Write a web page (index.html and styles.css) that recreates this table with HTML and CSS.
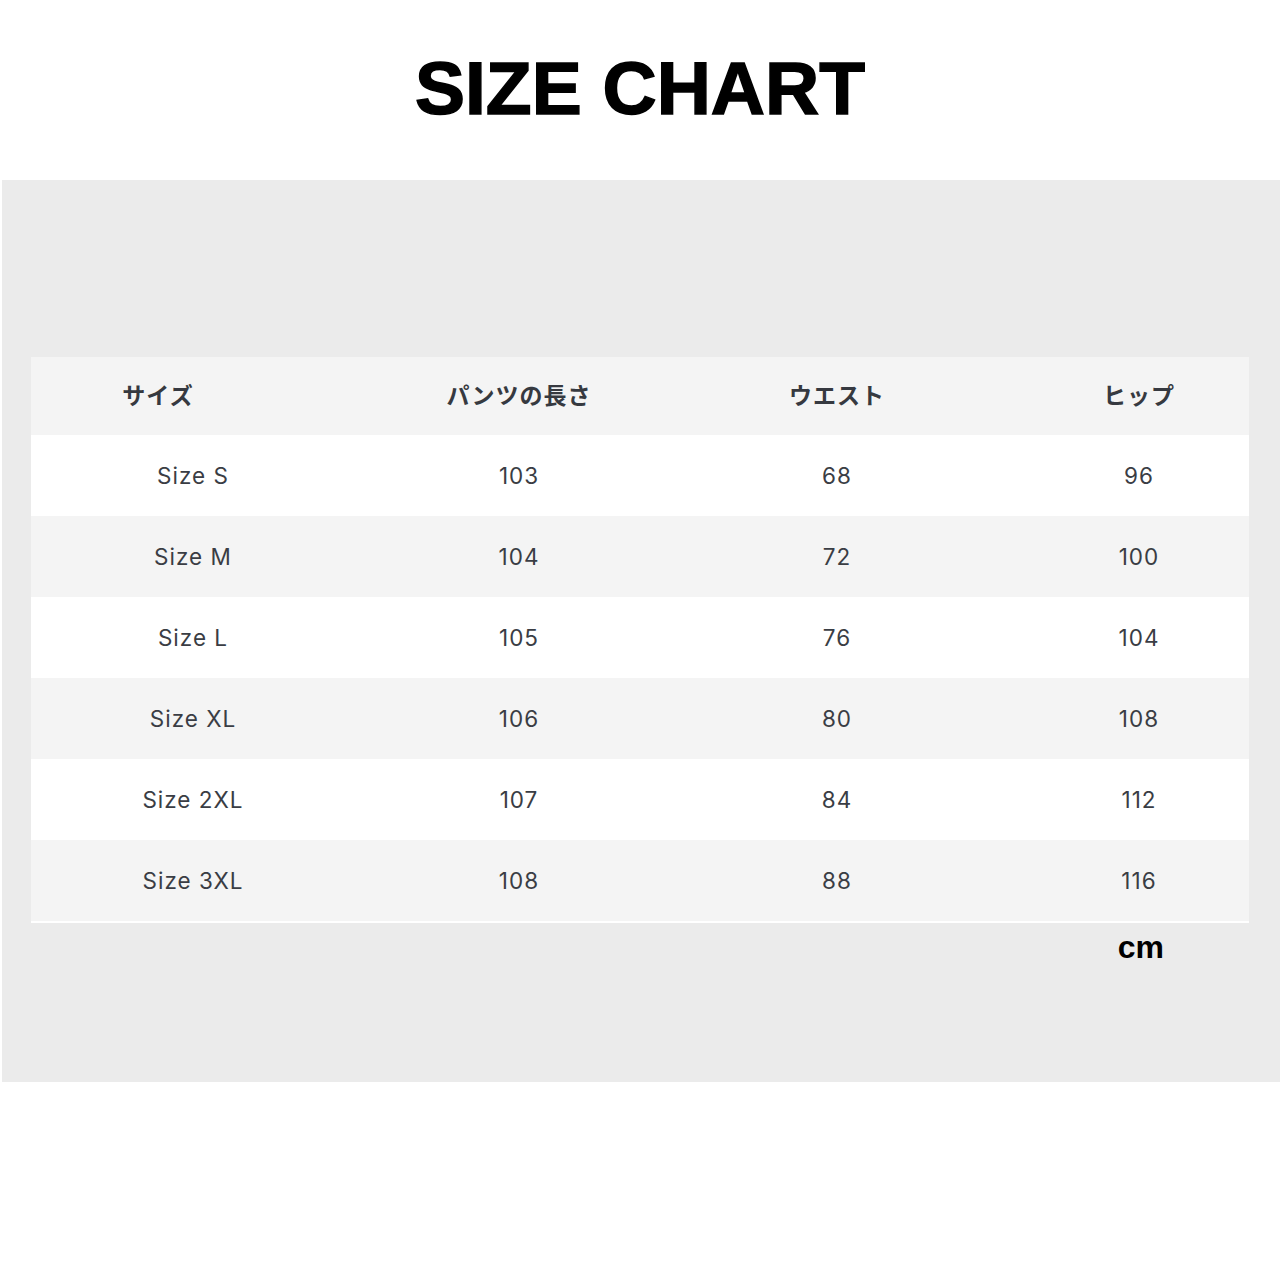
FILE: index.html
```html
<!DOCTYPE html>
<html lang="ja">
<head>
<meta charset="utf-8">
<title>SIZE CHART</title>
<link rel="stylesheet" href="styles.css">
</head>
<body>
<header class="title-bar"><h1 class="title">SIZE CHART</h1></header>
<section class="panel">
  <div class="chart">
    <div class="row head">
      <div class="cell c1">サイズ</div>
      <div class="cell c2">パンツの長さ</div>
      <div class="cell c3">ウエスト</div>
      <div class="cell c4">ヒップ</div>
    </div>
    <div class="row odd"><div class="cell c1">Size S</div><div class="cell c2">103</div><div class="cell c3">68</div><div class="cell c4">96</div></div>
    <div class="row even"><div class="cell c1">Size M</div><div class="cell c2">104</div><div class="cell c3">72</div><div class="cell c4">100</div></div>
    <div class="row odd"><div class="cell c1">Size L</div><div class="cell c2">105</div><div class="cell c3">76</div><div class="cell c4">104</div></div>
    <div class="row even"><div class="cell c1">Size XL</div><div class="cell c2">106</div><div class="cell c3">80</div><div class="cell c4">108</div></div>
    <div class="row odd"><div class="cell c1">Size 2XL</div><div class="cell c2">107</div><div class="cell c3">84</div><div class="cell c4">112</div></div>
    <div class="row even last"><div class="cell c1">Size 3XL</div><div class="cell c2">108</div><div class="cell c3">88</div><div class="cell c4">116</div></div>
  </div>
  <div class="unit-row"><span class="unit">cm</span></div>
</section>
</body>
</html>
```
FILE: styles.css
```css
html, body {
  margin: 0;
  padding: 0;
  background: #ffffff;
}
body {
  width: 1280px;
  height: 1280px;
  font-family: "Inter", "Noto Sans CJK JP", sans-serif;
}
.title-bar {
  height: 180px;
  display: flex;
  justify-content: center;
  align-items: center;
}
.title {
  margin: 0;
  padding-bottom: 4px;
  font-family: "Liberation Sans", Arial, sans-serif;
  font-weight: 900;
  font-size: 75px;
  line-height: 1;
  color: #000;
  -webkit-text-stroke: 1.5px #000;
}
.panel {
  margin-left: 2px;
  height: 902px;
  background: #ebebeb;
  padding-top: 177px;
  box-sizing: border-box;
}
.chart {
  margin: 0 31px 0 29px;
}
.row {
  display: grid;
  grid-template-columns: 324px 328px 308px 258px;
  height: 81px;
  align-items: center;
}
.row.head {
  height: 78px;
  background: #f4f4f4;
}
.row.odd { background: #ffffff; }
.row.even { background: #f4f4f4; }
.row.last { border-bottom: 2px solid #ffffff; }
.cell {
  text-align: center;
  font-family: "Inter", "Liberation Sans", sans-serif;
  font-size: 22.5px;
  letter-spacing: 1px;
  color: #3a3d44;
}
.head .cell {
  font-family: "Noto Sans CJK JP", sans-serif;
  font-weight: 700;
  font-size: 23px;
  letter-spacing: 1px;
  color: #363940;
  padding-bottom: 4px;
}
.cell.c4 { padding-left: 38px; }
.head .cell.c1 { padding-right: 70px; }
.unit-row {
  display: flex;
  justify-content: flex-end;
  padding-right: 116px;
  padding-top: 6px;
}
.unit {
  font-family: "Liberation Sans", Arial, sans-serif;
  font-weight: 700;
  font-size: 32px;
  color: #000;
}
```
